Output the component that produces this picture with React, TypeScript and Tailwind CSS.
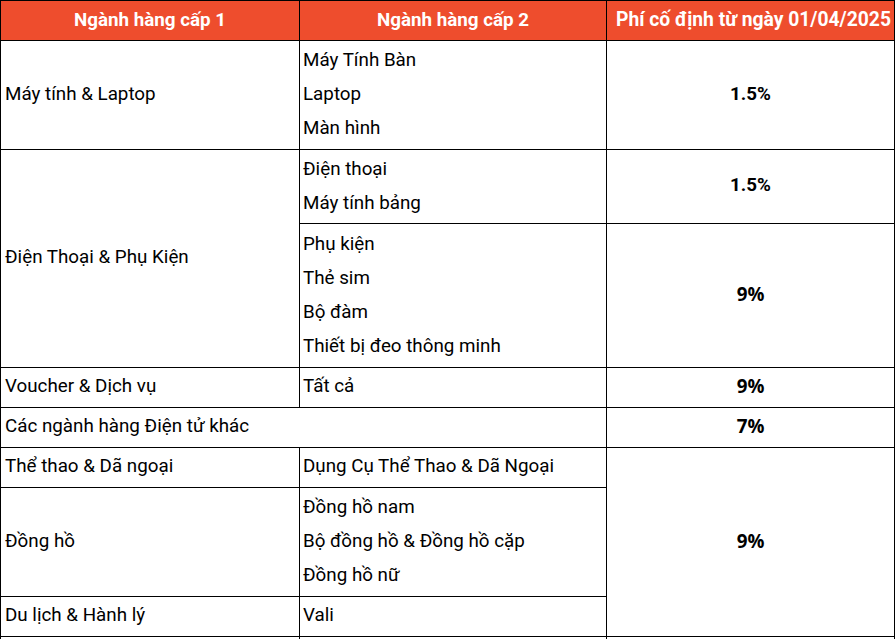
import React from "react";

const font = { fontFamily: "Roboto, 'Noto Sans', sans-serif" };

function Lines({ items }: { items: string[] }) {
  return (
    <div className="flex flex-col justify-center h-full pl-[3px] pb-[2px]">
      {items.map((t) => (
        <div key={t} className="h-[34px] leading-[34px]">
          {t}
        </div>
      ))}
    </div>
  );
}

export default function App() {
  const cell = "bg-white text-[18.8px] text-black";
  const left = "flex items-center pl-[4px] pb-[2px]";
  const pct = "flex items-center justify-center font-bold text-[18.3px] pb-[2px]";
  const pctOS = "flex items-center justify-center font-bold text-[17px] font-['Open_Sans',sans-serif] pb-[2px]";
  const head = "bg-[#ee4d2d] text-white font-bold flex items-center justify-center pb-[1px]";
  return (
    <div className="bg-white w-[896px]" style={font}>
      <div className="grid w-[895px] bg-black gap-px p-px grid-cols-[298px_306px_287px] grid-rows-[39px_108px_73px_143px_39px_39px_39px_108px_39px_39px]">
        {/* header */}
        <div className={`${head} text-[18.8px] col-start-1 row-start-1`}>Ngành hàng cấp 1</div>
        <div className={`${head} text-[18.8px] col-start-2 row-start-1`}>Ngành hàng cấp 2</div>
        <div className={`${head} text-[19.3px] col-start-3 row-start-1 pl-[6px]`}>Phí cố định từ ngày 01/04/2025</div>

        {/* row 1 */}
        <div className={`${cell} ${left} col-start-1 row-start-2`}>Máy tính &amp; Laptop</div>
        <div className={`${cell} col-start-2 row-start-2`}>
          <Lines items={["Máy Tính Bàn", "Laptop", "Màn hình"]} />
        </div>
        <div className={`${cell} ${pct} col-start-3 row-start-2`}>1.5%</div>

        {/* row 2 */}
        <div className={`${cell} ${left} col-start-1 row-start-3 row-span-2`}>Điện Thoại &amp; Phụ Kiện</div>
        <div className={`${cell} col-start-2 row-start-3`}>
          <Lines items={["Điện thoại", "Máy tính bảng"]} />
        </div>
        <div className={`${cell} ${pct} col-start-3 row-start-3`}>1.5%</div>
        <div className={`${cell} col-start-2 row-start-4`}>
          <Lines items={["Phụ kiện", "Thẻ sim", "Bộ đàm", "Thiết bị đeo thông minh"]} />
        </div>
        <div className={`${cell} ${pctOS} col-start-3 row-start-4`}>9%</div>

        {/* row 3 */}
        <div className={`${cell} ${left} col-start-1 row-start-5`}>Voucher &amp; Dịch vụ</div>
        <div className={`${cell} ${left} col-start-2 row-start-5 !pl-[3px]`}>Tất cả</div>
        <div className={`${cell} ${pctOS} col-start-3 row-start-5`}>9%</div>

        {/* row 4 */}
        <div className={`${cell} ${left} col-start-1 col-span-2 row-start-6`}>Các ngành hàng Điện tử khác</div>
        <div className={`${cell} ${pctOS} col-start-3 row-start-6`}>7%</div>

        {/* row 5 */}
        <div className={`${cell} ${left} col-start-1 row-start-7`}>Thể thao &amp; Dã ngoại</div>
        <div className={`${cell} ${left} col-start-2 row-start-7 !pl-[3px]`}>Dụng Cụ Thể Thao &amp; Dã Ngoại</div>
        <div className={`${cell} ${pctOS} col-start-3 row-start-7 row-span-3`}>9%</div>

        {/* row 6 */}
        <div className={`${cell} ${left} col-start-1 row-start-8`}>Đồng hồ</div>
        <div className={`${cell} col-start-2 row-start-8`}>
          <Lines items={["Đồng hồ nam", "Bộ đồng hồ & Đồng hồ cặp", "Đồng hồ nữ"]} />
        </div>

        {/* row 7 */}
        <div className={`${cell} ${left} col-start-1 row-start-9`}>Du lịch &amp; Hành lý</div>
        <div className={`${cell} ${left} col-start-2 row-start-9 !pl-[3px]`}>Vali</div>

        {/* row 8 (cut off) */}
        <div className={`${cell} col-start-1 row-start-10`}></div>
        <div className={`${cell} col-start-2 row-start-10`}></div>
        <div className={`${cell} col-start-3 row-start-10`}></div>
      </div>
    </div>
  );
}
